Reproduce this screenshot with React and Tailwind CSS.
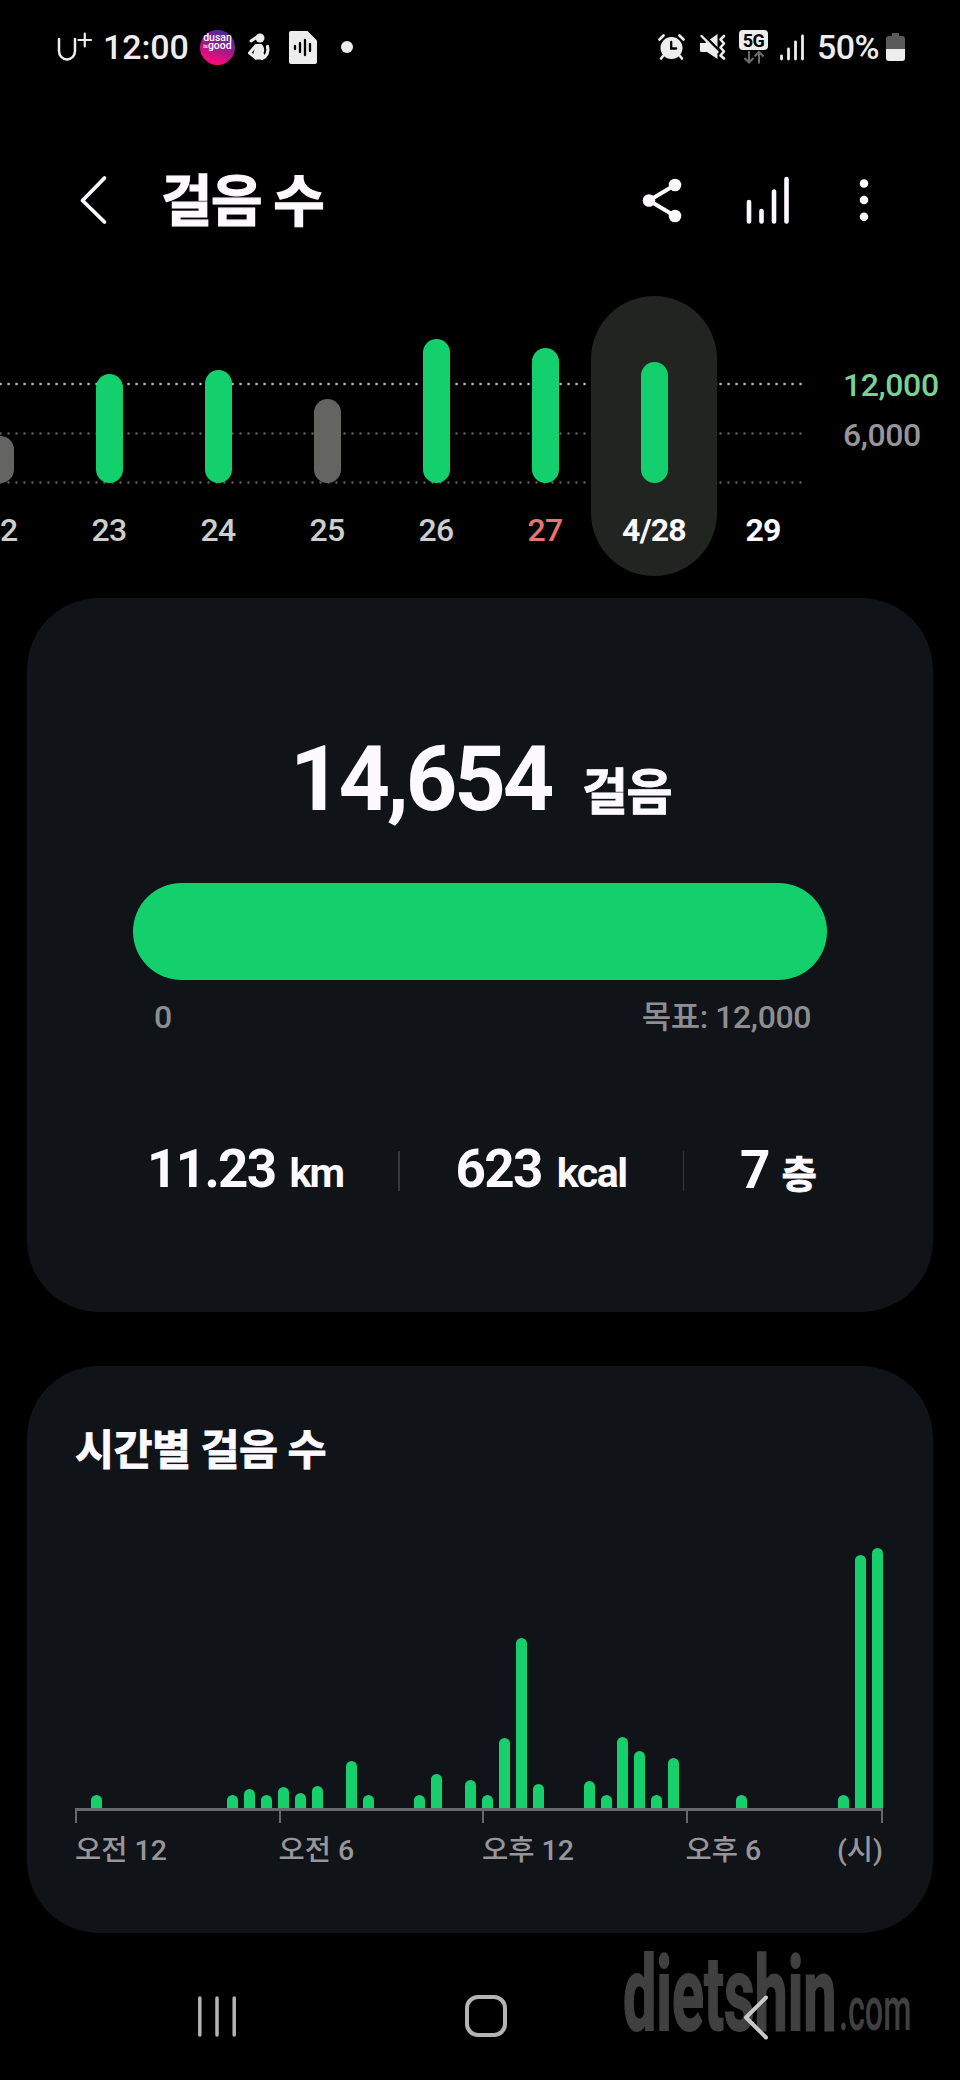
const KR = "font-['Roboto','Noto_Sans_CJK_KR',sans-serif]";

const DAYS = [
  { label: '22', height: 47, tone: 'miss' },
  { label: '23', height: 109, tone: 'hit' },
  { label: '24', height: 113, tone: 'hit' },
  { label: '25', height: 84, tone: 'miss' },
  { label: '26', height: 144, tone: 'hit' },
  { label: '27', height: 135, tone: 'hit', sunday: true },
  { label: '4/28', height: 121, tone: 'hit', selected: true },
  { label: '29', height: 0, tone: 'miss', future: true },
];

const HALF_HOURS = [
  0, 13.5, 0, 0, 0, 0, 0, 0, 0, 13.5, 19, 13.5, 21, 15, 22, 0, 47, 13.5, 0, 0, 13.5, 34.5, 0, 28,
  13.5, 70, 170, 24, 0, 0, 27.5, 13.5, 71, 57, 13.5, 50, 0, 0, 0, 13.5, 0, 0, 0, 0, 0, 13.5, 253.5, 260,
];

function StatusBar() {
  return (
    <div className="flex h-[94px] items-center text-[#ededed]">
      <svg className="ml-[57px] h-[30px] w-[36px]" viewBox="0 0 36 30" fill="none" stroke="currentColor" strokeLinecap="round">
        <path d="M2 7V19a8 8.500 0 0 0 16 0V7" strokeWidth="2.500" />
        <path d="M21.500 8H34M27.800 1.500V14.500" strokeWidth="2.200" />
      </svg>
      <span className="ml-[10px] w-[87px] text-[34px] leading-[40px] font-medium tracking-[-0.1px]">12:00</span>
      <div className="ml-[10px] flex h-[35px] w-[35px] flex-col items-center rounded-full bg-[linear-gradient(20deg,#ff0a78_15%,#a01a8c_50%,#4a2898_90%)] pt-[4px] text-[10.5px] leading-[7.5px] font-medium text-white">
        <span className="h-[8px]">dusan</span>
        <span className="flex h-[8px] items-center"><span className="text-[6px]">is</span>good</span>
      </div>
      <svg className="ml-[12px] h-[28px] w-[24px]" viewBox="0 0 24 28" fill="none" stroke="currentColor" strokeLinecap="round" strokeLinejoin="round">
        <circle cx="13" cy="5" r="4.500" fill="currentColor" stroke="none" />
        <path d="M10 4L4 8" strokeWidth="3" />
        <path d="M9 11h5.500c2.500 2.500 3.500 6 2 9 1.500 2 1 5-1 6.500H8L6 22z" fill="currentColor" stroke="none" />
        <path d="M9 12.500L2.500 20 9 25" strokeWidth="3" />
        <path d="M20.500 13.500c1.500 5-.5 10-5.500 12" strokeWidth="3.200" />
      </svg>
      <svg className="ml-[18px] h-[33px] w-[28px]" viewBox="0 0 28 33">
        <path d="M2 0H18.500L28 9.500V31a2 2 0 0 1-2 2H2a2 2 0 0 1-2-2V2a2 2 0 0 1 2-2Z" fill="currentColor" />
        <path d="M6 15v3M11 12v9M16 9v15M21 13v7" stroke="#000" strokeWidth="2.300" strokeLinecap="round" />
      </svg>
      <div className="ml-[24px] h-[12px] w-[12px] rounded-full bg-[#ededed]" />
      <svg className="ml-[305px] h-[26px] w-[27px]" viewBox="0 0 27 26" fill="none" stroke="currentColor" strokeLinecap="round">
        <circle cx="13.500" cy="14" r="11" fill="currentColor" stroke="none" />
        <path d="M1.500 5.500l4-4M25.500 5.500l-4-4M5 22l-2 2.500M22 22l2 2.500" strokeWidth="2.600" />
        <path d="M13.200 8v6.500h5" stroke="#000" strokeWidth="2.300" />
      </svg>
      <svg className="ml-[14px] h-[28px] w-[27px]" viewBox="0 0 27 28" fill="none" stroke="currentColor" strokeLinecap="round">
        <path d="M1 10h5l12.500 -9v25L8 19H2q-1-.5-1-1.500z" fill="currentColor" stroke="none" />
        <path d="M4 1.500L20 17.500" stroke="#000" strokeWidth="2.600" />
        <path d="M2.500 3L18.500 19" strokeWidth="2.400" />
        <path d="M25 3l-3.500 3.500 3.500 4-3.500 4 3.500 4-3.500 4 3.500 3" strokeWidth="2.600" strokeLinejoin="round" />
      </svg>
      <div className="ml-[13px] flex h-[34px] w-[29px] flex-col items-center">
        <span className="h-[20px] w-[29px] rounded-[4px] bg-[#ededed] text-center text-[18px] leading-[21px] font-bold tracking-[-0.5px] text-black">5G</span>
        <svg className="h-[14px] w-[22px]" viewBox="0 0 22 14" fill="none" stroke="#6c6c6c" strokeWidth="2">
          <path d="M6 1v11M1.500 8L6 12.500 10.500 8M16 13.500V2M11.500 6.500L16 2l4.500 4.500" />
        </svg>
      </div>
      <svg className="ml-[11px] h-[27px] w-[26px]" viewBox="0 0 26 27" fill="none" stroke="currentColor" strokeWidth="2.800" strokeLinecap="round">
        <path d="M2.500 22v3M9.500 15v10M16.500 8v17M23.500 2v23" />
      </svg>
      <span className="ml-[12px] w-[64px] text-[34px] leading-[40px] font-medium tracking-[-0.6px]">50%</span>
      <svg className="ml-[5px] h-[28px] w-[19px]" viewBox="0 0 19 28">
        <path d="M6 0h7v3h3a3 3 0 0 1 3 3v19a3 3 0 0 1-3 3H3a3 3 0 0 1-3-3V6a3 3 0 0 1 3-3h3z" fill="#5a5a5a" />
        <path d="M0 16h19v9a3 3 0 0 1-3 3H3a3 3 0 0 1-3-3z" fill="currentColor" />
      </svg>
    </div>
  );
}

function Header() {
  return (
    <div className="flex h-[202px] items-center pt-[10px] text-[#fdfaff]">
      <svg className="ml-[79px] h-[52px] w-[29px]" viewBox="0 0 29 52" fill="none" stroke="currentColor" strokeWidth="3.800" strokeLinecap="round" strokeLinejoin="round">
        <path d="M25.500 4L3.500 26.500 25.500 48" />
      </svg>
      <h1 className="mt-[3px] ml-[53px] w-[300px] text-[56px] leading-[70px] font-bold tracking-[-1.6px] whitespace-nowrap [-webkit-text-stroke:1.2px_currentColor]">걸음 수</h1>
      <svg className="ml-[180px] h-[46px] w-[42px]" viewBox="0 0 42 46" fill="currentColor" stroke="currentColor">
        <path d="M34 8L8 23.500 34 39" fill="none" strokeWidth="4" />
        <g stroke="none">
          <circle cx="34" cy="8" r="6.300" />
          <circle cx="8" cy="23.500" r="6.300" />
          <circle cx="34" cy="39" r="6.300" />
        </g>
      </svg>
      <svg className="ml-[62px] h-[50px] w-[46px]" viewBox="0 0 46 50" fill="none" stroke="currentColor" strokeWidth="4.600" strokeLinecap="round">
        <path d="M4 27v19.500M16.500 36v10.500M29 16.500v30M41.500 4v42.500" />
      </svg>
      <svg className="ml-[68px] h-[44px] w-[10px]" viewBox="0 0 10 44" fill="currentColor">
        <circle cx="5" cy="5.500" r="4.300" />
        <circle cx="5" cy="22" r="4.300" />
        <circle cx="5" cy="38.700" r="4.300" />
      </svg>
    </div>
  );
}

function labelTone(day) {
  if (day.selected || day.future) return 'font-bold text-[#fdfaff]';
  if (day.sunday) return 'font-medium text-[#e87470]';
  return 'font-medium text-[#cdcdcd]';
}

function DayChart() {
  return (
    <div className="flex h-[280px]">
      <div className="relative h-[280px] w-[803px] overflow-hidden">
        <svg className="absolute top-0 left-0 h-[280px] w-[803px]" viewBox="0 0 803 280" fill="none" strokeWidth="2.500" strokeLinecap="round" strokeDasharray="0 8">
          <path d="M.5 88H802" stroke="#a9d8bb" />
          <path d="M.5 137.500H802" stroke="#626262" />
          <path d="M.5 186.500H802" stroke="#626262" />
        </svg>
        <div className="relative -ml-[54.5px] flex w-[872px]">
          {DAYS.map((day) => (
            <div
              key={day.label}
              className={
                day.selected
                  ? '-mx-[8.5px] h-[280px] w-[126px] shrink-0 rounded-[63px] bg-[#222422]'
                  : 'h-[280px] w-[109px] shrink-0'
              }
            >
              <div className="flex h-[187px] items-end justify-center">
                <div
                  className={day.tone === 'hit' ? 'w-[27px] rounded-full bg-[#13d06d]' : 'w-[27px] rounded-full bg-[#646562]'}
                  style={{ height: day.height }}
                />
              </div>
              <div className={'mt-[28px] text-center text-[32px] leading-[38px] tracking-[-0.8px] ' + labelTone(day)}>{day.label}</div>
            </div>
          ))}
        </div>
      </div>
      <div className="ml-[40px] flex flex-col pt-[69px] text-[32px] leading-[40px] font-medium tracking-[-0.4px]">
        <span className="text-[#78d295]">12,000</span>
        <span className="mt-[10px] text-[#979599]">6,000</span>
      </div>
    </div>
  );
}

function Stat({ value, unit, className, unitClass }) {
  return (
    <div className={'flex items-baseline font-bold whitespace-nowrap ' + className}>
      <span className="text-[53px] leading-[62px] tracking-[-1.7px]">{value}</span>
      <span className={unitClass}>{unit}</span>
    </div>
  );
}

function SummaryCard() {
  return (
    <section className="mx-[27px] mt-[22px] h-[714px] rounded-[72px] bg-[#101418] pt-[129px] text-[#fdfaff]">
      <div className="flex h-[108px] items-baseline pl-[263px] font-bold whitespace-nowrap">
        <span className="w-[292px] text-[90px] leading-[106px] tracking-[-3.2px]">14,654</span>
        <span className="text-[50px] leading-[60px] tracking-[-1.5px] [-webkit-text-stroke:1px_currentColor]">걸음</span>
      </div>
      <div className="mx-[106px] mt-[48px] h-[97px] rounded-full bg-[#13d06d]" />
      <div className="mx-[122px] mt-[17px] flex justify-between pl-[5px] text-[32px] leading-[40px] font-medium tracking-[-0.4px] text-[#8e8d92]">
        <span>0</span>
        <span>목표: 12,000</span>
      </div>
      <div className="mt-[101px] flex items-center">
        <Stat value="11.23" unit="km" className="ml-[120px] w-[251px]" unitClass="ml-[14px] text-[41px] tracking-[-1.8px]" />
        <div className="h-[40px] w-[1.500px] bg-[#34373b]" />
        <Stat value="623" unit="kcal" className="ml-[56px] w-[227px]" unitClass="ml-[15px] text-[41px] tracking-[-1.4px]" />
        <div className="h-[40px] w-[1.500px] bg-[#34373b]" />
        <Stat value="7" unit="층" className="ml-[56px]" unitClass="ml-[13px] text-[38px] [-webkit-text-stroke:1px_currentColor]" />
      </div>
    </section>
  );
}

function HourlyCard() {
  return (
    <section className="mx-[27px] mt-[54px] flex h-[567px] flex-col rounded-[72px] bg-[#101418] pt-[58px]">
      <h2 className="ml-[48px] text-[42.5px] leading-[54px] font-bold tracking-[-0.6px] text-[#fdfaff] [-webkit-text-stroke:0.8px_currentColor]">시간별 걸음 수</h2>
      <div className="mt-[58px] ml-[44.5px] flex h-[272px] w-[814.500px] items-end">
        {HALF_HOURS.map((height, i) => (
          <div key={i} className="flex flex-1 justify-center">
            <div className="w-[11px] rounded-t-full bg-[#18cf6e]" style={{ height }} />
          </div>
        ))}
      </div>
      <div className="ml-[48px] h-[3px] w-[808px] bg-[#67686a]" />
      <div className="ml-[48px] flex h-[12px] w-[808px]">
        <div className="w-[203.5px] border-l-2 border-[#67686a]" />
        <div className="w-[203.5px] border-l-[2.500px] border-[#67686a]" />
        <div className="w-[203.5px] border-l-[2.500px] border-[#67686a]" />
        <div className="flex-1 border-x-2 border-[#67686a]" />
      </div>
      <div className="mt-[8px] ml-[48px] flex w-[808px] text-[28.5px] leading-[40px] font-medium text-[#98969b]">
        <span className="w-[203.5px]">오전 12</span>
        <span className="w-[203.5px]">오전 6</span>
        <span className="w-[203.5px]">오후 12</span>
        <span>오후 6</span>
        <span className="ml-auto">(시)</span>
      </div>
    </section>
  );
}

function NavBar() {
  return (
    <div className="relative flex h-[147px] items-start pt-[61px] text-[#b4b4b4]">
      <div className="absolute top-0 left-[623px] flex h-[110px] items-baseline font-bold text-[#404040]">
        <span className="w-[216px] origin-left scale-x-[0.575] text-[103px] leading-[124px] [-webkit-text-stroke:2px_currentColor]">dietshin</span>
        <span className="w-[72px] origin-left scale-x-[0.53] text-[61px] leading-[60px] font-medium">.com</span>
      </div>
      <svg className="ml-[196px] h-[44px] w-[42px]" viewBox="0 0 42 44" stroke="currentColor" strokeWidth="3.500" strokeLinecap="round">
        <path d="M3.800 4v37M21 4v37M38.200 4v37" />
      </svg>
      <div className="mt-[1px] ml-[227px] h-[42px] w-[42px] rounded-[13px] border-[4px] border-[#b4b4b4]" />
      <svg className="relative ml-[235px] h-[46px] w-[28px] text-[#c8c8c8]" viewBox="0 0 28 46" fill="none" stroke="currentColor" strokeWidth="4" strokeLinecap="round" strokeLinejoin="round">
        <path d="M24 3.500L4 23.500 24 43.500" />
      </svg>
    </div>
  );
}

export default function App() {
  return (
    <main className={'h-[2080px] w-[960px] overflow-hidden bg-black ' + KR}>
      <StatusBar />
      <Header />
      <DayChart />
      <SummaryCard />
      <HourlyCard />
      <NavBar />
    </main>
  );
}
